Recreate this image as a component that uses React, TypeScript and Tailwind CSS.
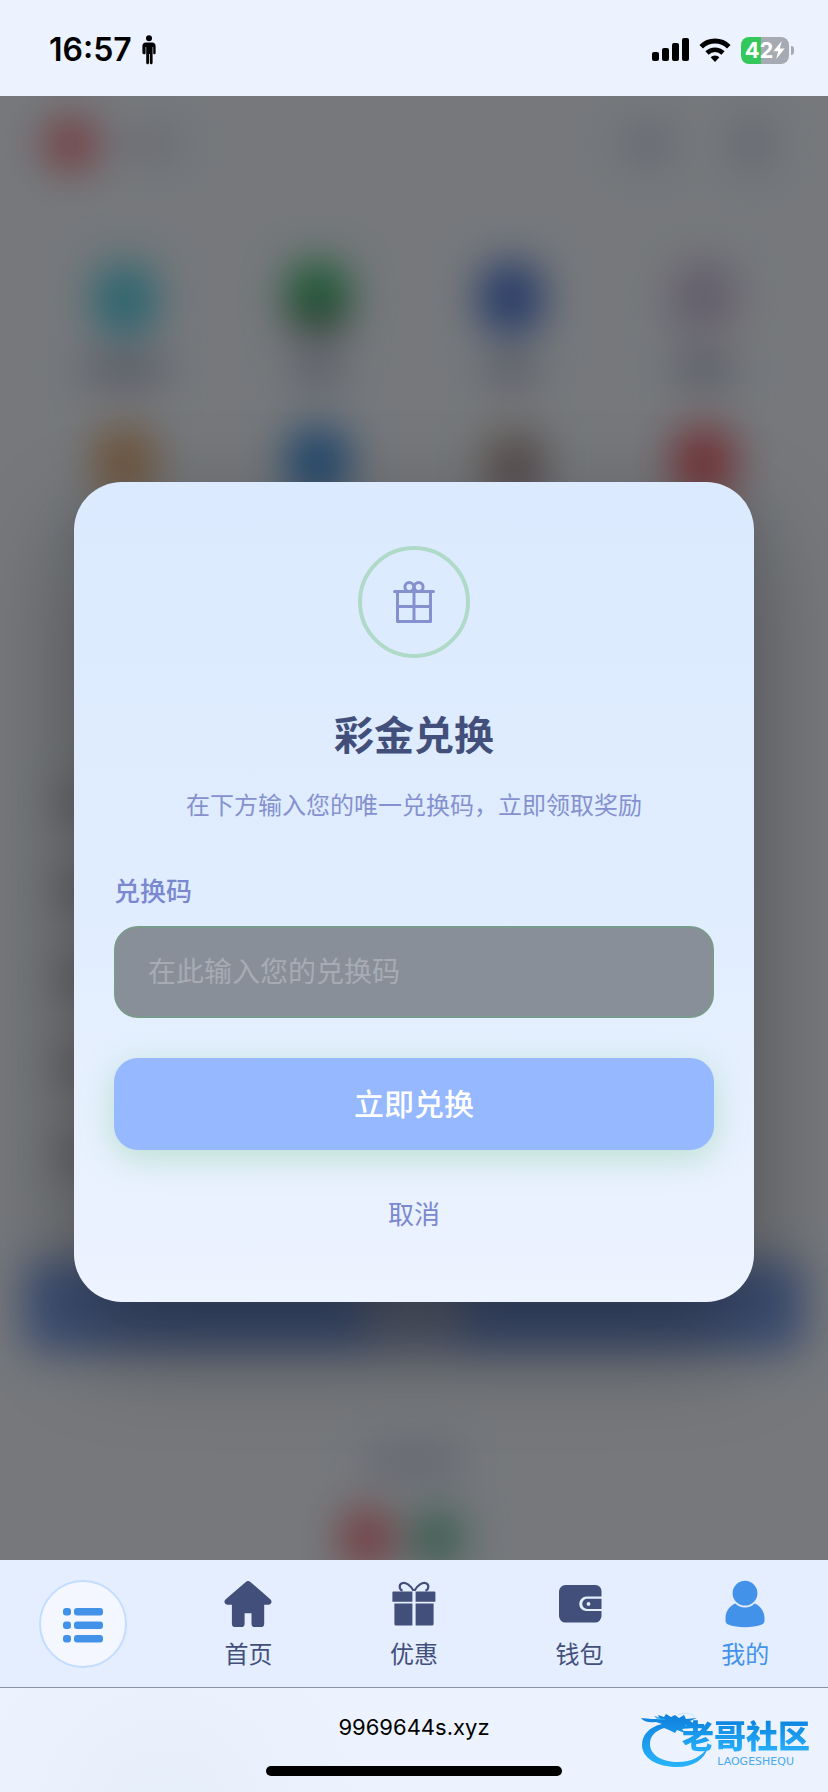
import React from 'react';

const tiles = [
  { key: 'a', icon: 'bg-gradient-to-b from-[#6cd4e0] to-[#48c0dc]', label: 'w-20' },
  { key: 'b', icon: 'bg-gradient-to-b from-[#38b468] from-50% to-[#54545c]', label: 'w-12' },
  { key: 'c', icon: 'bg-[#5078d0]', label: 'w-12' },
  { key: 'd', icon: 'bg-gradient-to-br from-[#dcbcc0] via-[#bcb8e0] to-[#ecc8c4]', label: 'w-14' },
  { key: 'e', icon: 'bg-[#dcac7c]', label: 'w-20' },
  { key: 'f', icon: 'bg-[#4890d8]', label: 'w-20' },
  { key: 'g', icon: 'bg-gradient-to-br from-[#e4dcc8] to-[#806878]', label: 'w-20' },
  { key: 'h', icon: 'bg-[#e46870]', label: 'w-20' },
];

const rows = ['a', 'b', 'c', 'd', 'e'];

function PersonGlyph() {
  return (
    <svg className="h-[30px] w-[14px]" viewBox="0 0 14 30" fill="currentColor" aria-hidden="true">
      <circle cx="7" cy="3.2" r="3" />
      <path d="M4 7.4h6c2.200 0 3.600 1.400 3.600 3.600v7c0 .8-.5 1.300-1.200 1.300s-1.200-.5-1.200-1.300V12h-.6v15.800c0 .9-.6 1.500-1.400 1.500s-1.400-.6-1.400-1.500V19h-.8v8.800c0 .9-.6 1.500-1.400 1.500s-1.400-.6-1.400-1.500V12h-.6v6c0 .8-.5 1.300-1.200 1.300S.4 18.800.4 18v-7C.4 8.800 1.800 7.400 4 7.400z" />
    </svg>
  );
}

function SignalGlyph() {
  return (
    <svg className="h-6 w-[37px]" viewBox="0 0 37 24" aria-hidden="true">
      <rect x="0" y="14" width="7" height="9" rx="2" />
      <rect x="10" y="10" width="7" height="13" rx="2" />
      <rect x="20" y="5" width="7" height="18" rx="2" />
      <rect x="30" y="0" width="7" height="23" rx="2" />
    </svg>
  );
}

function WifiGlyph() {
  return (
    <svg className="h-6 w-8" viewBox="0 0 32 24" aria-hidden="true">
      <path d="M2.200 8.700a19.500 19.500 0 0 1 27.600 0" fill="none" stroke="currentColor" strokeWidth="5" />
      <path d="M8 15a11.400 11.400 0 0 1 16 0" fill="none" stroke="currentColor" strokeWidth="4.600" />
      <path d="M11.600 19.300a6.300 6.300 0 0 1 8.800 0L16 24z" />
    </svg>
  );
}

function Battery() {
  return (
    <div className="flex items-center gap-[2px]" aria-label="电量 42%">
      <div className="flex h-[27px] w-12 items-center justify-center rounded-lg bg-gradient-to-r from-[#34c759] from-42% to-[#a6aab2] to-42% text-white">
        <span className="text-[22px] leading-none font-bold">42</span>
        <svg className="h-[18px] w-3" viewBox="0 0 12 18" fill="currentColor" aria-hidden="true">
          <path d="M8.800 0 .3 10.200h4.900L3.200 18l8.500-10.400H6.800z" />
        </svg>
      </div>
      <div className="h-[9px] w-[3px] rounded-r-full bg-[#a6aab2]" />
    </div>
  );
}

function GiftOutline() {
  return (
    <svg className="h-[42px] w-[42px]" viewBox="0 0 42 42" fill="none" stroke="#8591cf" strokeWidth="3" strokeLinecap="round" strokeLinejoin="round" aria-hidden="true">
      <path d="M1.500 10.500h39M4.500 10.500v30h33v-30M4.500 25.500h33M21 10.500v30" />
      <circle cx="16.300" cy="6" r="4.400" />
      <circle cx="25.700" cy="6" r="4.400" />
    </svg>
  );
}

function HomeIcon() {
  return (
    <svg className="h-12 w-12" viewBox="0 0 48 48" fill="currentColor" aria-hidden="true">
      <path d="M21.800 2a3.600 3.600 0 0 1 4.600 0L46.300 19.200c2.400 2.200 1.200 5.500-1.900 5.500h-4.200v19a3.400 3.400 0 0 1-3.400 3.400h-5.900a3.400 3.400 0 0 1-3.400-3.400V33.200h-6.900v10.500a3.400 3.400 0 0 1-3.400 3.400h-5.900a3.400 3.400 0 0 1-3.400-3.400v-19H3.600c-3.100 0-4.300-3.300-1.900-5.500z" />
    </svg>
  );
}

function GiftIcon() {
  return (
    <svg className="h-12 w-12" viewBox="0 0 48 48" aria-hidden="true">
      <g fill="currentColor">
        <path d="M3.400 11.500h19v10.200H2.400v-9.200a1 1 0 0 1 1-1zM25.600 11.500h18.800a1 1 0 0 1 1 1v9.200H25.600zM4.400 23.600h18v22H6a1.600 1.600 0 0 1-1.600-1.600zM25.600 23.600h18V44a1.600 1.600 0 0 1-1.600 1.600H25.600z" />
      </g>
      <path d="M23.600 10.800C20.500 5 15.500 2 12 3.200c-3.300 1.300-3 6.300.5 7.400M24.400 10.800C27.500 5 32.500 2 36 3.200c3.300 1.300 3 6.300-.5 7.400" fill="none" stroke="currentColor" strokeWidth="2.200" />
    </svg>
  );
}

function WalletIcon() {
  return (
    <svg className="h-12 w-12" viewBox="0 0 48 48" fill="currentColor" aria-hidden="true">
      <path d="M9.500 5h30a6 6 0 0 1 6 6v5.500H30.500a7.300 7.300 0 0 0 0 14.600h15v5a6.500 6.500 0 0 1-6.500 6.500H9.500A6.500 6.500 0 0 1 3 36.100V11.500A6.500 6.500 0 0 1 9.500 5z" />
      <path fillRule="evenodd" d="M31.300 18.700h14.200v10.200H31.300a5.100 5.100 0 0 1 0-10.200zM32.500 22a1.900 1.900 0 1 0 0 3.800 1.900 1.900 0 0 0 0-3.800z" />
    </svg>
  );
}

function UserIcon() {
  return (
    <svg className="h-12 w-12" viewBox="0 0 48 48" fill="currentColor" aria-hidden="true">
      <circle cx="24" cy="13.200" r="12.400" />
      <path d="M14.300 23.600a13.800 13.800 0 0 0 19.400 0c5.900 2.400 9.800 8.200 9.800 14.500v2.500c0 2-.8 3.100-2.600 4-4.600 2-10.700 2.700-16.900 2.700s-12.300-.7-16.900-2.700c-1.800-.9-2.600-2-2.600-4v-2.500c0-6.300 3.900-12.100 9.800-14.500z" />
    </svg>
  );
}

function ListIcon() {
  return (
    <svg className="h-10 w-10" viewBox="0 0 40 40" fill="currentColor" aria-hidden="true">
      <rect x="0" y="4" width="8" height="7.600" rx="3" />
      <rect x="11" y="4" width="29" height="7.600" rx="3" />
      <rect x="0" y="17.500" width="8" height="7.600" rx="3" />
      <rect x="11" y="17.500" width="29" height="7.600" rx="3" />
      <rect x="0" y="31" width="8" height="7.600" rx="3" />
      <rect x="11" y="31" width="29" height="7.600" rx="3" />
    </svg>
  );
}

function DragonMark() {
  return (
    <svg className="h-14 w-[70px]" viewBox="0 0 70 56" aria-hidden="true">
      <defs>
        <linearGradient id="dragon" x1="0" y1="0" x2="0" y2="1">
          <stop offset="0" stopColor="#1080dc" />
          <stop offset="1" stopColor="#28b4fc" />
        </linearGradient>
      </defs>
      <g fill="url(#dragon)">
        <path d="M22 12C9 15 2 23 2 33c0 13 15 22 35 22 17 0 28-8 31-20-6 9-16 15-30 15-16 0-28-7-28-18 0-8 5-13 14-16l5 2 6 3 2-3 8 3-3-4 9-1-6-3 10-1-5-3 7-3-11 1-2-4-5 3-4-3-4 2-5-3-2 3-6-2 2 4-8 0L1 6c3 4 8 5 15 4z" />
        <path d="M18 8 14 4c5 1 9 1 12 4z" opacity=".7" />
      </g>
      <path d="M38 3c6-3 13-2 17 2" fill="none" stroke="#c8e2fa" strokeWidth="1" />
    </svg>
  );
}

const tabs = [
  { name: '首页', Icon: HomeIcon, active: false },
  { name: '优惠', Icon: GiftIcon, active: false },
  { name: '钱包', Icon: WalletIcon, active: false },
  { name: '我的', Icon: UserIcon, active: true },
];

function AccountPage() {
  return (
    <div className="flex flex-1 flex-col blur-[20px]" aria-hidden="true">
      <div className="flex h-24 items-center gap-6 px-11">
        <div className="h-[54px] w-[54px] rounded-full bg-[#e8747c]" />
        <div className="h-5 w-14 bg-[#c4c8dc]" />
        <div className="mr-9 ml-auto h-10 w-14 rounded-full bg-[#ccd2e4]" />
        <div className="mr-4 h-12 w-8 bg-[#c0c8d8]" />
      </div>
      <div className="grid grid-cols-4 gap-y-11 px-7 pt-[70px]">
        {tiles.map((tile) => (
          <div key={tile.key} className="flex flex-col items-center gap-6">
            <div className={'h-[72px] w-16 rounded-3xl ' + tile.icon} />
            <div className={'h-6 bg-[#a4a8c0] ' + tile.label} />
          </div>
        ))}
      </div>
      <div className="flex flex-col gap-14 px-14 pt-60">
        {rows.map((row) => (
          <div key={row} className="h-8 w-10 rounded-lg bg-[#bcb8c0]" />
        ))}
      </div>
      <div className="mx-6 mt-auto flex h-[92px] items-center justify-center rounded-2xl bg-[#7c9ee6]">
        <div className="h-20 w-24 bg-[#aab8dc]" />
      </div>
      <div className="mx-auto mt-24 h-7 w-24 bg-[#c4c8e0]" />
      <div className="-mb-2 flex justify-center gap-4 pt-8 pr-6">
        <div className="h-[60px] w-[54px] rounded-full bg-[#e8747c]" />
        <div className="h-[60px] w-[54px] rounded-full bg-[#74b8a0]" />
      </div>
    </div>
  );
}

export default function App() {
  return (
    <div className="flex min-h-screen flex-col bg-[#ecf3fe] font-['Inter','Noto_Sans_CJK_SC',sans-serif]">
      <header className="flex h-24 items-center justify-between bg-[#ecf3fe] pr-[34px] pl-[49px] text-black">
        <div className="flex items-center gap-[10px] pt-1">
          <time className="text-[32px] leading-10 font-semibold">16:57</time>
          <PersonGlyph />
        </div>
        <div className="flex items-center gap-[10px] pt-1">
          <SignalGlyph />
          <WifiGlyph />
          <Battery />
        </div>
      </header>

      <div className="relative flex flex-1 flex-col overflow-hidden">
        <main className="flex flex-1 flex-col overflow-hidden bg-[#ecf1f8]">
          <AccountPage />
        </main>

        <div className="absolute inset-0 flex items-center justify-center bg-black/50 px-[74px]">
          <section
            role="dialog"
            aria-labelledby="dialog-title"
            className="flex w-full max-w-[680px] flex-col items-center rounded-[48px] bg-gradient-to-b from-[#dceaff] via-[#e0edfe] to-[#edf3ff] px-10 pt-16 pb-[42px] shadow-[0_40px_100px_rgba(0,0,0,0.35)]"
          >
            <div className="flex h-28 w-28 items-center justify-center rounded-full border-4 border-[#b0dac8]">
              <GiftOutline />
            </div>
            <h1 id="dialog-title" className="mt-[54px] text-[40px] leading-[48px] font-bold text-[#434f7b]">
              彩金兑换
            </h1>
            <p className="mt-7 text-2xl leading-9 text-[#8591cf]">{'在下方输入您的唯一兑换码\uff0c立即领取奖励'}</p>
            <form className="mt-[50px] flex w-full flex-col" onSubmit={(e) => e.preventDefault()}>
              <label htmlFor="code" className="text-[26px] leading-9 font-medium text-[#7a88cf]">
                兑换码
              </label>
              <input
                id="code"
                type="text"
                placeholder="在此输入您的兑换码"
                className="mt-4 h-[92px] w-full rounded-3xl border-2 border-[#7a9a8b] bg-[#888f99] px-8 text-[28px] text-white placeholder:text-[#a7abb3]"
              />
              <button
                type="submit"
                className="mt-10 h-[92px] rounded-3xl bg-[#95b8ff] text-[30px] font-medium text-white shadow-[0_8px_32px_rgba(120,200,140,0.4)]"
              >
                立即兑换
              </button>
              <button type="button" className="mt-[18px] h-[92px] text-[26px] text-[#7a88cf]">
                取消
              </button>
            </form>
          </section>
        </div>

        <nav className="z-10 grid h-32 grid-cols-5 border-b border-[#8b919e] bg-[#e4eeff]">
          <div className="flex items-center justify-center">
            <button
              type="button"
              aria-label="菜单"
              className="flex h-[88px] w-[88px] items-center justify-center rounded-full border-2 border-[#c2ddff] bg-[#f4f7ff] text-[#4392e9]"
            >
              <ListIcon />
            </button>
          </div>
          {tabs.map(({ name, Icon, active }) => (
            <a
              key={name}
              href="#"
              className={
                'flex flex-col items-center gap-2 pt-5 text-2xl leading-[38px] ' + (active ? 'text-[#4392e9]' : 'text-[#434f7b]')
              }
            >
              <Icon />
              {name}
            </a>
          ))}
        </nav>
      </div>

      <footer className="relative flex h-[104px] flex-col items-center justify-between bg-[radial-gradient(circle_at_20%_120%,#e6eefa,#ecf3fe_30%)] pt-6 pb-4 text-black">
        <span className="text-[22px] leading-[30px]">9969644s.xyz</span>
        <div className="h-[10px] w-[296px] max-w-full rounded-full bg-black" />
        <div className="absolute top-6 right-4 flex w-[172px] items-start">
          <DragonMark />
          <div className="relative -ml-7 flex flex-col items-end pt-1 font-['Noto_Sans_CJK_SC',sans-serif]">
            <strong className="bg-gradient-to-b from-[#0a7fdc] to-[#28b0fa] bg-clip-text text-[32px] leading-9 font-black text-transparent">
              老哥社区
            </strong>
            <span className="pt-1 pr-4 font-['DejaVu_Sans',sans-serif] text-[11px] leading-3 text-[#4aa8ee]">LAOGESHEQU</span>
          </div>
        </div>
      </footer>
    </div>
  );
}
